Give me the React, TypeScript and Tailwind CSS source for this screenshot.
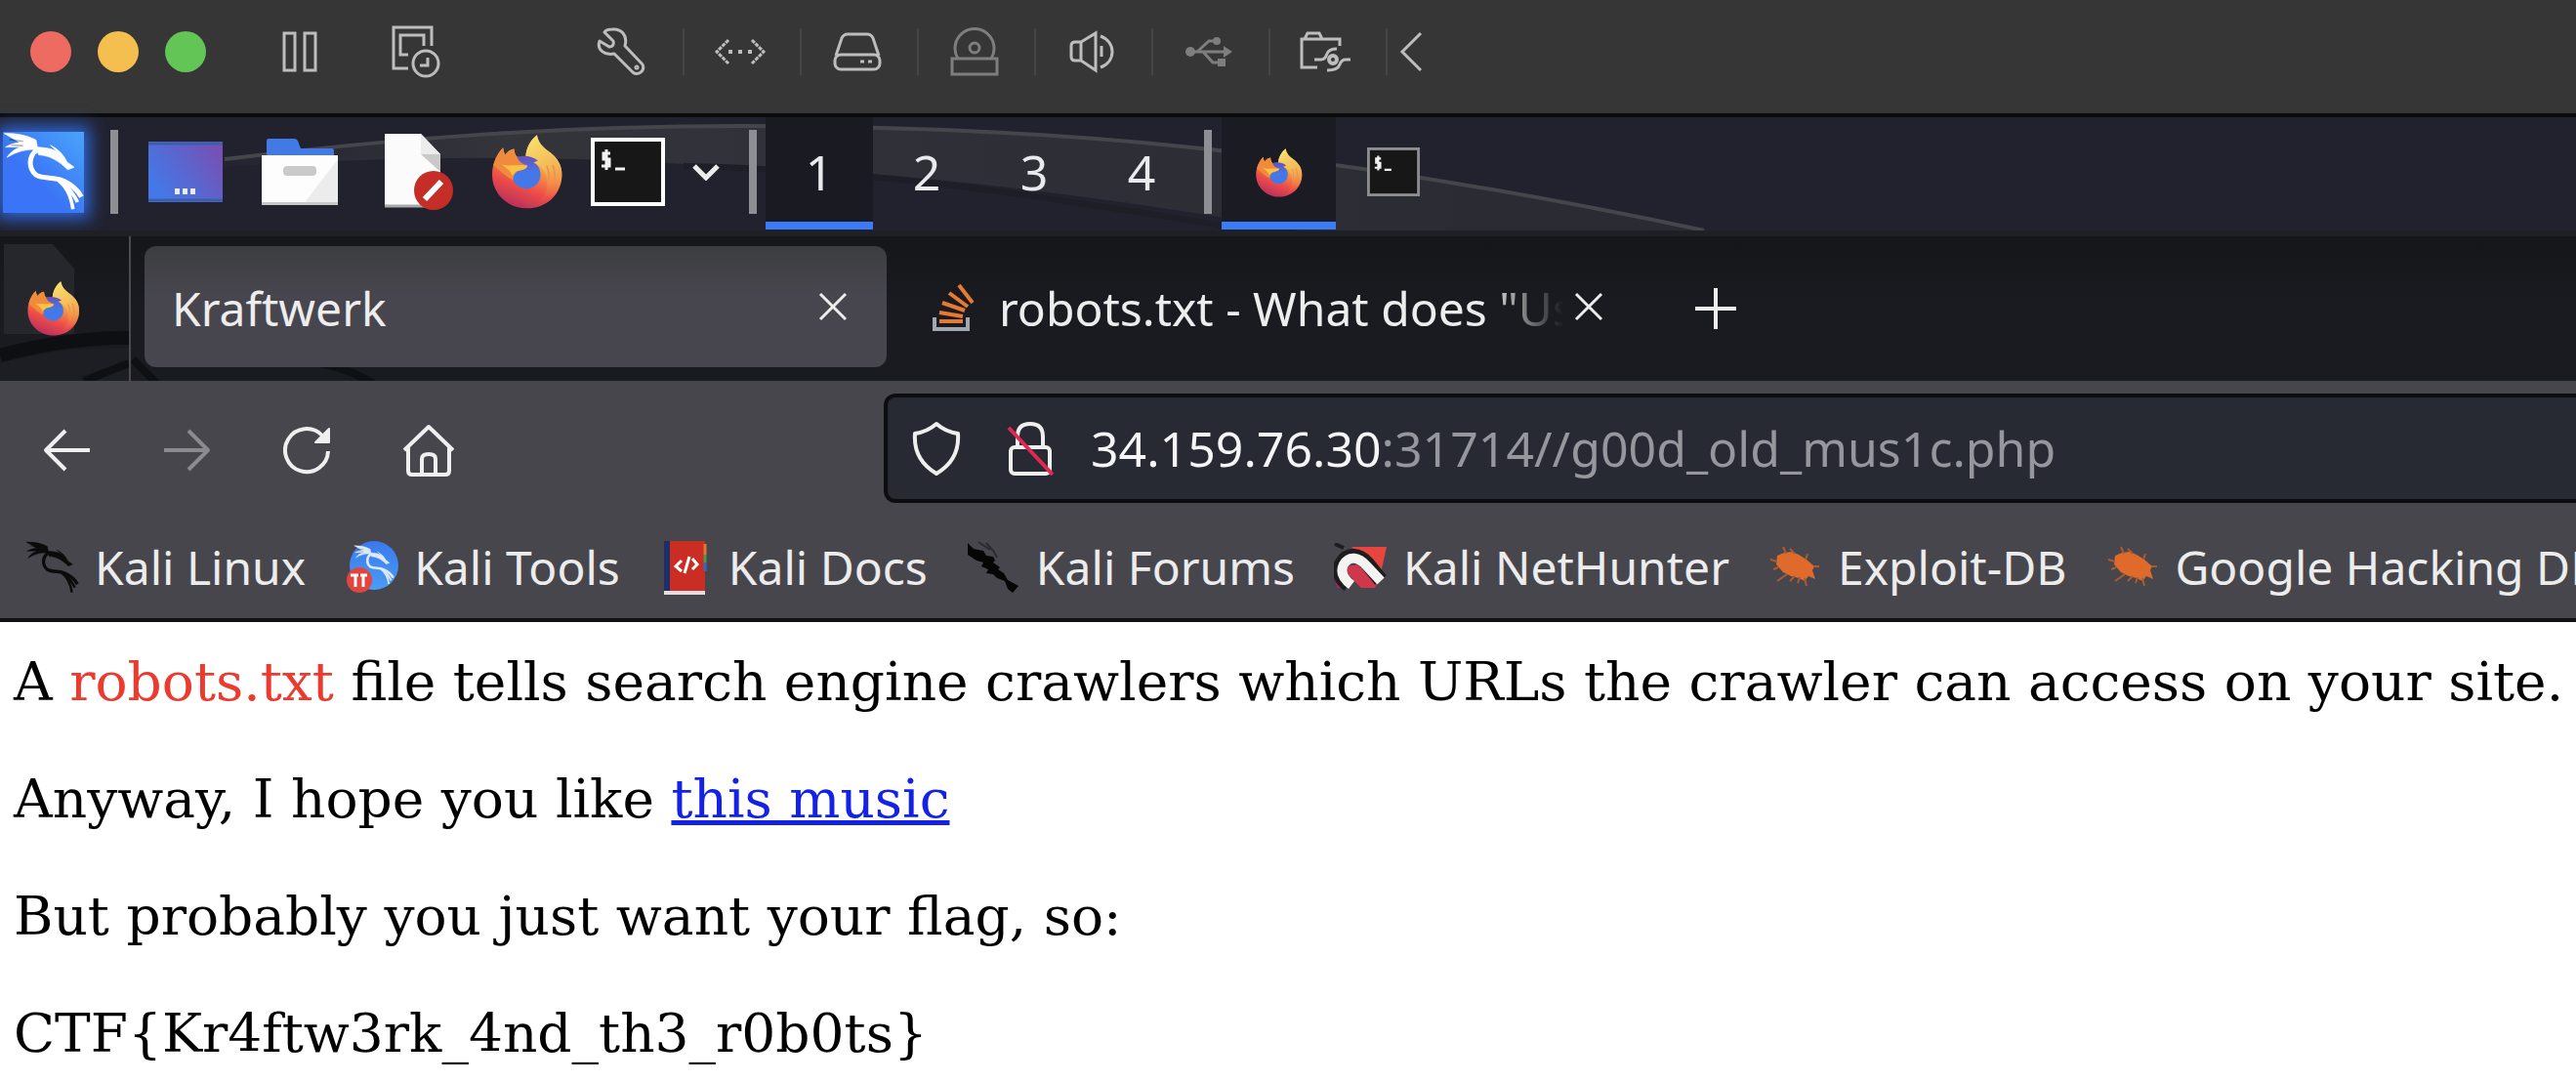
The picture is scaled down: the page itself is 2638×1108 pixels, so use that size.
import React, { useId } from "react";

type IconProps = { className?: string };

/* ---------- shared logos ---------- */

function Dragon({ className }: IconProps) {
  return (
    <svg viewBox="10 45 250 250" className={className} fill="none" stroke="currentColor" strokeLinejoin="round" aria-hidden="true">
      <path d="M14 50 Q70 48 112 70 L118 100 Q70 95 22 124 Q40 98 66 92 L18 92 Q36 80 62 78 Z" fill="currentColor" strokeWidth="2" />
      <path d="M30 69 L72 74 M36 86 L72 88" stroke="#00000055" strokeWidth="4" />
      <path d="M116 100 C88 120 88 158 112 178 C136 192 168 182 196 196 C222 208 240 222 252 246" strokeWidth="15" />
      <path d="M178 192 C206 214 220 240 226 284 M196 200 C216 222 230 240 240 262" strokeWidth="11" />
      <path d="M112 92 C146 94 166 98 180 108 L156 86 Q192 104 208 138 L230 154 L210 162 C184 136 156 118 120 116 Z" fill="currentColor" strokeWidth="2" />
    </svg>
  );
}

function FirefoxLogo({ className }: IconProps) {
  const id = useId();
  return (
    <svg viewBox="372 56 222 230" className={className} aria-hidden="true">
      <defs>
        <linearGradient id={id + "a"} x1="0.75" y1="0" x2="0.35" y2="1">
          <stop offset="0.2" stopColor="#f6cf5c" />
          <stop offset="0.45" stopColor="#f59a43" />
          <stop offset="0.72" stopColor="#ee4c48" />
          <stop offset="1" stopColor="#b8305c" />
        </linearGradient>
        <linearGradient id={id + "b"} x1="0.3" y1="0" x2="0.6" y2="1">
          <stop offset="0" stopColor="#f8e06e" />
          <stop offset="0.55" stopColor="#f3b856" />
          <stop offset="1" stopColor="#f0764a" stopOpacity="0" />
        </linearGradient>
        <linearGradient id={id + "c"} x1="0" y1="0" x2="0" y2="1">
          <stop offset="0" stopColor="#6a50b8" />
          <stop offset="0.5" stopColor="#4478e8" />
        </linearGradient>
      </defs>
      <path fill={`url(#${id}a)`} d="M513 57C517 80 530 94 547 106 578 128 592 152 590 186 587 242 542 284 482 284 420 284 374 236 374 180 374 148 386 118 408 96 409 106 411 112 415 118 421 108 430 102 442 100 443 112 446 120 452 125L478 124C480 96 492 74 513 57Z" />
      <path fill={`url(#${id}b)`} d="M513 57C517 80 530 94 547 106 578 128 592 152 590 186 587 226 560 256 520 262 552 236 554 188 528 160 514 144 496 136 478 124 480 96 492 74 513 57Z" />
      <path fill={`url(#${id}c)`} d="M452 125C475 118 500 124 516 136L502 142C518 150 524 164 524 180A44 43 0 0 1 436 180Z" />
      <path fill="#f08a3c" d="M378 150C384 128 394 110 408 96 409 106 411 112 415 118 421 108 430 102 442 100 443 112 446 122 452 128 458 140 468 148 482 150 482 162 462 166 452 170 444 176 438 184 439 196 420 190 400 168 378 150Z" />
      <path fill="#fbc245" d="M405 148C430 156 454 146 484 152 482 164 462 166 452 168 444 172 442 178 436 182 432 166 418 160 405 148Z" />
      <path fill="none" stroke="#f0924a" strokeWidth="5" d="M543 152C552 172 552 188 546 206M562 150C570 172 570 186 565 200" />
    </svg>
  );
}

/* ---------- virtual machine window bar ---------- */

const thin = { fill: "none", stroke: "currentColor", strokeWidth: 3 } as const;

function PauseIcon() {
  return (
    <svg width="36" height="42" viewBox="0 0 36 42" {...thin} aria-hidden="true">
      <rect x="2" y="2" width="11" height="38" /><rect x="23" y="2" width="11" height="38" />
    </svg>
  );
}
function SnapshotIcon() {
  return (
    <svg width="50" height="54" viewBox="0 0 50 54" {...thin} aria-hidden="true">
      <path d="M17 44H2V2H41V21M33 21V10H9V30H17" /><circle cx="35" cy="39" r="13" /><path d="M37 33V41H29" />
    </svg>
  );
}
function WrenchIcon() {
  return (
    <svg width="50" height="50" viewBox="0 0 50 50" {...thin} strokeLinejoin="round" aria-hidden="true">
      <path d="M8 5 17 14C18 18 16 20 13 20L3 14C0 22 7 29 18 27L37 46C42 50 50 45 47 38L29 19C32 8 25 1 16 2 12 2 9 3 8 5Z" /><circle cx="41" cy="41" r="1" />
    </svg>
  );
}
function NetworkIcon() {
  return (
    <svg width="52" height="28" viewBox="0 0 52 28" {...thin} aria-hidden="true">
      <path d="M14 2 2 14 14 26M38 2 50 14 38 26" strokeDasharray="4 1" /><path d="M14 14H39" strokeWidth="4" strokeDasharray="4 6" />
    </svg>
  );
}
function DiskIcon() {
  return (
    <svg width="50" height="40" viewBox="0 0 50 40" {...thin} aria-hidden="true">
      <path d="M3 24 9 6Q11 2 15 2H35Q39 2 41 6L47 24" /><rect x="2" y="23" width="46" height="15" rx="6" /><path d="M28 30H32M36 30H40" />
    </svg>
  );
}
function OpticalIcon() {
  return (
    <svg width="50" height="50" viewBox="0 0 50 50" {...thin} aria-hidden="true">
      <rect x="2" y="32" width="46" height="16" /><path d="M8 32A20 20 0 1 1 42 32" /><circle cx="25" cy="21" r="5" />
    </svg>
  );
}
function SoundIcon() {
  return (
    <svg width="46" height="44" viewBox="0 0 46 44" {...thin} aria-hidden="true">
      <path d="M12 12H6Q2 12 2 16V27Q2 31 6 31H12ZM12 12 27 3V41L12 31M32 6C48 12 48 32 32 38M33 16V27" />
    </svg>
  );
}
function UsbIcon() {
  return (
    <svg width="48" height="32" viewBox="0 0 48 32" {...thin} aria-hidden="true">
      <path d="M4 16H42M12 16 24 5H32M18 16 28 27H36" />
      <path fill="currentColor" stroke="none" d="M39 10 48 16 39 22Z" />
      <circle cx="5" cy="16" r="5" fill="currentColor" stroke="none" /><circle cx="32" cy="5" r="4" fill="currentColor" stroke="none" />
      <rect x="33" y="23" width="8" height="8" fill="currentColor" stroke="none" />
    </svg>
  );
}
function SharedFolderIcon() {
  return (
    <svg width="54" height="42" viewBox="0 0 54 42" {...thin} aria-hidden="true">
      <path d="M18 37H2V8H41V15M5 8 8 2H20L23 8" />
      <path d="M15 29H22Q26 29 28 23 30 18 38 18M52 29H47Q43 29 41 34 39 40 28 40" /><circle cx="34" cy="29" r="4" strokeWidth="4" />
    </svg>
  );
}

const devices = [
  { label: "Network", icon: <NetworkIcon />, dim: false },
  { label: "Hard disk", icon: <DiskIcon />, dim: false },
  { label: "Optical drive", icon: <OpticalIcon />, dim: true },
  { label: "Sound", icon: <SoundIcon />, dim: false },
  { label: "USB", icon: <UsbIcon />, dim: true },
  { label: "Shared folders", icon: <SharedFolderIcon />, dim: false },
];

function WindowBar() {
  return (
    <header className="flex h-[120px] items-center border-b-4 border-[#0b0b0c] bg-[#363636] pb-2.5 pl-[31px] text-[#bdbdbd]">
      <div className="flex gap-[27px]">
        <button aria-label="Close window" className="size-[42px] rounded-full bg-[#ed6b60]" />
        <button aria-label="Minimize window" className="size-[42px] rounded-full bg-[#f5bf4f]" />
        <button aria-label="Zoom window" className="size-[42px] rounded-full bg-[#62c555]" />
      </div>
      <button aria-label="Pause" className="ml-[78px]"><PauseIcon /></button>
      <button aria-label="Snapshots" className="ml-[76px]"><SnapshotIcon /></button>
      <button aria-label="Configure" className="ml-40"><WrenchIcon /></button>
      <div className="ml-[38px] flex">
        {devices.map((d) => (
          <div key={d.label} className={`flex h-12 w-[120px] items-center justify-center border-l-2 border-[#464646] pr-1 ${d.dim ? "text-[#7e7e7e]" : ""}`}>
            <button aria-label={d.label}>{d.icon}</button>
          </div>
        ))}
        <button aria-label="Collapse toolbar" className="h-12 border-l-2 border-[#464646] pl-3">
          <svg width="24" height="42" viewBox="0 0 24 42" {...thin} aria-hidden="true"><path d="M22 2 3 21 22 40" /></svg>
        </button>
      </div>
    </header>
  );
}

/* ---------- desktop panel ---------- */

function PanelWallpaper() {
  const id = useId();
  return (
    <svg className="absolute left-0 top-0" width="1760" height="116" viewBox="0 0 1760 116" fill="none" aria-hidden="true">
      <defs>
        <linearGradient id={id} x1="0" y1="0" x2="1" y2="0">
          <stop offset="0.05" stopColor="#34353b" stopOpacity="0" />
          <stop offset="0.25" stopColor="#34353b" />
          <stop offset="0.6" stopColor="#2d2e36" />
          <stop offset="1" stopColor="#292a32" />
        </linearGradient>
      </defs>
      <path fill={`url(#${id})`} d="M110 58C320 30 520 9 760 9 1060 9 1340 30 1745 116H1330C1130 80 900 52 730 50 560 38 400 38 110 58Z" />
      <path stroke="#45464c" strokeWidth="4" d="M230 43C420 20 580 9 760 9 1060 9 1340 30 1745 116" />
      <path stroke="#1d1e26" strokeWidth="6" d="M700 50C900 54 1060 80 1260 112" />
    </svg>
  );
}

function TerminalIcon({ className }: IconProps) {
  return (
    <svg viewBox="0 0 76 70" preserveAspectRatio="none" className={className} aria-hidden="true">
      <rect x="2" y="2" width="72" height="66" fill="#171717" stroke="currentColor" strokeWidth="4" />
      <path d="M20 16H13V22H19V29H11M16 12V33M25 32H35" fill="none" stroke="#f2f2f2" strokeWidth="3" />
    </svg>
  );
}

function Divider() {
  return <div className="h-[86px] w-2 shrink-0 bg-[#8e8f94]" />;
}

function Panel() {
  return (
    <nav aria-label="Desktop panel" className="relative h-[116px] bg-[#21222e]">
      <PanelWallpaper />
      <div className="relative flex h-full items-center pb-1 pl-[3px]">
        <button aria-label="Applications" className="size-[83px] bg-linear-to-tr from-[#3b74f6] from-40% to-[#4ba3fa] text-white shadow-[0_0_16px_6px_#2f66d8]">
          <Dragon className="size-full" />
        </button>
        <div className="ml-[27px]"><Divider /></div>
        <button aria-label="Show desktop" className="ml-[31px]">
          <svg width="76" height="62" viewBox="0 0 76 62" aria-hidden="true">
            <defs><linearGradient id="desk" x1="0" y1="0.8" x2="1" y2="0.2"><stop offset="0.1" stopColor="#4478e6" /><stop offset="1" stopColor="#7650b4" /></linearGradient></defs>
            <rect width="76" height="62" fill="url(#desk)" />
            <path d="M0 2H76M0 60H76" stroke="#3a5fae" strokeWidth="3" />
            <path d="M27 51H48" stroke="#e9ecfb" strokeWidth="6" strokeDasharray="5 3" />
          </svg>
        </button>
        <button aria-label="Files" className="ml-10">
          <svg width="78" height="70" viewBox="0 0 78 70" aria-hidden="true">
            <path fill="#4179e6" d="M5 20V3Q5 1 7 1H33Q37 1 38 6L40 11H72Q74 11 74 14V20Z" />
            <rect y="18" width="78" height="51" fill="#fdfdfd" /><path fill="#ececec" d="M78 22V69H42Z" />
            <rect y="66" width="78" height="3" fill="#c9c9c9" /><rect x="22" y="29" width="34" height="10" rx="4" fill="#cacaca" />
          </svg>
        </button>
        <button aria-label="Text editor" className="ml-[46px]">
          <svg width="72" height="80" viewBox="0 0 72 80" aria-hidden="true">
            <path fill="#fbfbfb" d="M2 1H39L59 22V76H2Z" /><path fill="#c9c9c9" d="M39 22H59V40Z" /><path fill="#ececec" d="M39 1 59 22H39Z" />
            <path d="M2 75H45" stroke="#a9a9a9" strokeWidth="3" />
            <circle cx="52" cy="59" r="20" fill="#c42e26" /><path d="M43 68 60 50" stroke="#fff" strokeWidth="6" />
          </svg>
        </button>
        <button aria-label="Firefox" className="ml-[39px]"><FirefoxLogo className="h-[76px] w-[74px]" /></button>
        <button aria-label="Terminal" className="ml-7 text-white"><TerminalIcon className="h-[70px] w-[76px]" /></button>
        <button aria-label="More terminals" className="ml-7">
          <svg width="28" height="18" viewBox="0 0 28 18" fill="none" stroke="#ececec" strokeWidth="5" aria-hidden="true"><path d="M2 3 14 15 26 3" /></svg>
        </button>
        <div className="ml-[30px]"><Divider /></div>
        <div className="ml-[9px] flex h-[115px] self-start pr-px text-[50px] text-[#e8eaee]">
          {["1", "2", "3", "4"].map((n) => (
            <button key={n} aria-pressed={n === "1"} className={n === "1" ? "w-[110px] border-b-8 border-[#3b7bf7] bg-[#191a22] pt-1" : "w-[110px] pb-1"}>{n}</button>
          ))}
        </div>
        <div className="ml-2"><Divider /></div>
        <button aria-label="Firefox window" className="ml-[10px] flex h-[115px] w-[117px] items-center justify-center self-start border-b-8 border-[#3b7bf7] bg-[#1a1b23] pt-1.5">
          <FirefoxLogo className="size-[50px]" />
        </button>
        <button aria-label="Terminal window" className="flex h-full w-[117px] items-center justify-center text-[#8d8d8d]">
          <TerminalIcon className="h-[50px] w-[54px]" />
        </button>
      </div>
    </nav>
  );
}

/* ---------- browser ---------- */

function CloseIcon() {
  return <svg width="30" height="30" viewBox="0 0 30 30" fill="none" stroke="currentColor" strokeWidth="3" aria-hidden="true"><path d="M2 2 28 28M28 2 2 28" /></svg>;
}

function TabStrip() {
  return (
    <div className="relative flex h-[154px] items-stretch border-t-[6px] border-[#1f2026] bg-linear-to-b from-[#15161a] to-[#1a1b20] to-50%">
      <svg className="absolute bottom-0 left-0" width="410" height="52" viewBox="0 0 410 52" fill="none" aria-hidden="true">
        <path d="M0 34C44 22 88 17 132 18V52H0Z" fill="#1d1e23" />
        <path d="M0 26C44 14 88 8 132 8" stroke="#0e0f12" strokeWidth="14" />
        <path d="M86 52 132 34M136 30 160 54M320 32Q360 40 384 56" stroke="#0f1013" strokeWidth="8" />
      </svg>
      <div className="relative flex w-[134px] items-center border-r-2 border-[#4b4b50]">
        <svg className="absolute left-1 top-2" width="74" height="92" viewBox="0 0 74 92" aria-hidden="true"><path fill="#26272c" d="M0 0H50L72 25V92H0Z" /></svg>
        <FirefoxLogo className="relative ml-7 h-[56px] w-[54px]" />
      </div>
      <div role="tablist" className="relative flex pb-[14px] pl-[14px] pt-[10px] text-[48px] text-[#ededed]">
        <div className="flex w-[760px] items-center justify-between rounded-xl bg-linear-to-b from-[#3c3d41] to-[#47464e] to-40% pl-7 pr-10">
          <button role="tab" aria-selected="true" className="pt-1">Kraftwerk</button>
          <button aria-label="Close Kraftwerk"><CloseIcon /></button>
        </div>
        <div className="flex items-center pl-[47px]">
          <svg width="44" height="50" viewBox="0 0 44 50" fill="none" aria-hidden="true">
            <path d="M2 36V48H36V36" stroke="#a2a8b0" strokeWidth="4" />
            <path d="M7 40H31M7 31 31 35M10 21 33 29M17 11 36 25M27 3 41 21" stroke="#e67a32" strokeWidth="4" />
          </svg>
          <button role="tab" aria-selected="false" className="ml-6 w-[578px] overflow-hidden whitespace-nowrap pt-1 text-left mask-r-from-86% mask-r-to-100%">robots.txt - What does "User</button>
          <button aria-label="Close robots.txt tab" className="ml-[11px]"><CloseIcon /></button>
          <button aria-label="New tab" className="ml-[93px] pt-1">
            <svg width="44" height="44" viewBox="0 0 44 44" fill="none" stroke="currentColor" strokeWidth="4" aria-hidden="true"><path d="M1 22H43M22 1V43" /></svg>
          </button>
        </div>
      </div>
    </div>
  );
}

const stroke = { fill: "none", stroke: "currentColor", strokeWidth: 4, strokeLinejoin: "round" } as const;

function NavBar() {
  return (
    <div className="flex items-center pl-11 pt-[13px] text-[#efefef]">
      <div className="flex items-center gap-[74px] pt-1">
        <button aria-label="Back"><svg width="49" height="44" viewBox="0 0 49 44" {...stroke} aria-hidden="true"><path d="M23 2 3 22 23 42M3 22H48" /></svg></button>
        <button aria-label="Forward" className="text-[#8a8a8f]"><svg width="49" height="44" viewBox="0 0 49 44" {...stroke} aria-hidden="true"><path d="M26 2 46 22 26 42M46 22H1" /></svg></button>
        <button aria-label="Reload">
          <svg width="49" height="50" viewBox="0 0 49 50" {...stroke} aria-hidden="true"><path d="M46 26A22 22 0 1 1 40 10" /><path d="M47 3V17H33Z" fill="currentColor" strokeWidth="2" /></svg>
        </button>
        <button aria-label="Home">
          <svg width="52" height="54" viewBox="0 0 52 54" {...stroke} aria-hidden="true"><path d="M1 27 26 3 51 27M5 24V48Q5 52 9 52H43Q47 52 47 48V24M19 52V36Q19 31 26 31T33 36V52" /></svg>
        </button>
      </div>
      <div className="ml-[440px] flex h-28 flex-1 items-center rounded-l-xl border-y-4 border-l-4 border-[#0d0d10] bg-[#282a33] pl-[25px]">
        <button aria-label="Tracking protection"><svg width="50" height="56" viewBox="0 0 50 56" {...stroke} aria-hidden="true"><path d="M25 3Q34 11 47 13 49 40 25 54 1 40 3 13 16 11 25 3Z" /></svg></button>
        <button aria-label="Connection not secure" className="ml-[47px]">
          <svg width="48" height="56" viewBox="0 0 48 56" {...stroke} aria-hidden="true">
            <rect x="4" y="27" width="40" height="27" rx="4" /><path d="M11 27V16Q11 3 24 3T37 16V27" />
            <path d="M2 7 47 55" stroke="#e22850" />
          </svg>
        </button>
        <input
          aria-label="Address"
          defaultValue="34.159.76.30:31714//g00d_old_mus1c.php"
          spellCheck={false}
          className="ml-[38px] h-20 min-w-0 flex-1 bg-[linear-gradient(to_right,#f6f6f8_296px,#96979d_296px)] bg-clip-text text-[50px] text-transparent caret-white outline-none"
        />
      </div>
    </div>
  );
}

function ExploitIcon() {
  return (
    <svg width="52" height="44" viewBox="0 0 52 44" aria-hidden="true">
      <path fill="#df6a2c" d="M8 10 15 7 23 6 30 9 38 14 46 21 44 25 47 34 40 31 36 36 30 33 22 31 14 27 7 19Z" />
      <path fill="none" stroke="#a85c34" strokeWidth="2" d="M17 8 14 1M26 8 21 3M37 14 39 8M45 21H51M8 16 1 14M9 22 4 24M18 29 8 36M26 31 21 36M36 33 38 41M31 32 29 38" />
    </svg>
  );
}

const bookmarks = [
  { label: "Kali Linux", icon: <Dragon className="h-[55px] w-[55px] text-[#0b0b0c]" /> },
  {
    label: "Kali Tools",
    icon: (
      <span className="relative block size-[54px]">
        <span className="absolute right-0 top-0 flex size-[50px] items-center justify-center rounded-full bg-linear-to-b from-[#3a78ee] to-[#4a9df4] text-[#dce9fb]"><Dragon className="size-[42px]" /></span>
        <svg className="absolute bottom-0 left-0" width="28" height="28" viewBox="0 0 28 28" aria-hidden="true"><circle cx="14" cy="14" r="13" fill="#e2453e" /><path d="M5 9H13M15 9H22M10 9V21M18 9V21" stroke="#fff" strokeWidth="3" /></svg>
      </span>
    ),
  },
  {
    label: "Kali Docs",
    icon: (
      <svg width="44" height="55" viewBox="0 0 44 55" aria-hidden="true">
        <rect width="8" height="52" fill="#1d2f66" /><rect x="6" width="36" height="51" fill="#c92d24" /><path d="M0 53H42" stroke="#e8dede" strokeWidth="4" />
        <path d="M42 3V14" stroke="#e07a2c" strokeWidth="3" /><path d="M42 14V22" stroke="#4c9a48" strokeWidth="3" /><path d="M42 22V31" stroke="#3e66b8" strokeWidth="3" />
        <path d="M18 20 12 26 18 31M29 18 34 24 29 29M26 16 21 33" fill="none" stroke="#fff" strokeWidth="3" />
      </svg>
    ),
  },
  {
    label: "Kali Forums",
    icon: (
      <svg width="55" height="54" viewBox="0 0 55 54" aria-hidden="true">
        <path fill="#060606" d="M1 2 7 8 17 10 20 15 27 16 29 20 27 22 34 27 32 29 38 33 42 40 53 46 47 53 42 49 39 41 31 38 27 34 20 33 22 29 15 26 17 22 10 20 1 14Z" />
        <path d="M12 1 24 9M20 2 28 11 31 17" fill="none" stroke="#2b2b30" strokeWidth="2" />
      </svg>
    ),
  },
  {
    label: "Kali NetHunter",
    icon: (
      <svg width="55" height="50" viewBox="0 0 55 50" aria-hidden="true">
        <path fill="#e8453f" d="M18 4H54L48 31Z" /><path fill="#d0364c" d="M14 24 24 22 46 38 42 46H28L14 32Z" /><path fill="#c41e6c" d="M0 36 10 46H4Z" />
        <path d="M15 43C8 38 3 30 8 21 14 10 26 12 34 21L48 38" fill="none" stroke="#1d1d20" strokeWidth="15" />
        <path d="M18 43C10 37 6 30 10 22 16 12 26 15 33 23L48 39" fill="none" stroke="#f3f3f1" strokeWidth="10" />
        <path d="M1 1 10 5" stroke="#1d1d20" strokeWidth="4" />
      </svg>
    ),
  },
  { label: "Exploit-DB", icon: <ExploitIcon /> },
  { label: "Google Hacking DB", icon: <ExploitIcon /> },
];

function BookmarksBar() {
  return (
    <nav aria-label="Bookmarks" className="flex h-[122px] items-center gap-10 overflow-hidden border-b-4 border-[#111113] pl-[26px] pt-3.5 text-[48px] text-[#ececec]">
      {bookmarks.map((b) => (
        <a key={b.label} href="#" className="flex shrink-0 items-center gap-4 whitespace-nowrap">
          <span className="flex w-[55px] justify-center">{b.icon}</span>
          {b.label}
        </a>
      ))}
    </nav>
  );
}

function Page() {
  return (
    <main className="flex flex-1 flex-col gap-14 overflow-hidden bg-white px-[14px] pb-5 pt-[29px] font-['DejaVu_Serif',serif] text-[55px] leading-[64px] text-black">
      <p className="whitespace-nowrap">A <span className="text-[#eb3b2f]">robots.txt</span> file tells search engine crawlers which URLs the crawler can access on your site.</p>
      <p>Anyway, I hope you like <a href="#" className="text-[#1322e6] underline">this music</a></p>
      <p>But probably you just want your flag, so:</p>
      <p>{"CTF{Kr4ftw3rk_4nd_th3_r0b0ts}"}</p>
    </main>
  );
}

export default function App() {
  return (
    <div className="flex min-h-screen flex-col overflow-hidden bg-[#47464d] font-['Noto_Sans',sans-serif] leading-none">
      <WindowBar />
      <Panel />
      <TabStrip />
      <NavBar />
      <BookmarksBar />
      <Page />
    </div>
  );
}
